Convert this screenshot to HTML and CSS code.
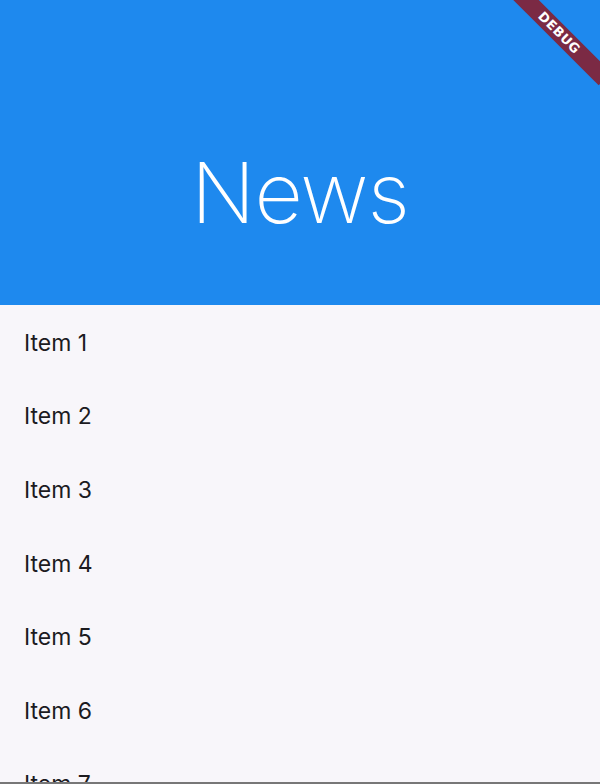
FILE: index.html
```html
<!DOCTYPE html>
<html>
<head>
<meta charset="utf-8">
<link rel="stylesheet" href="styles.css">
</head>
<body>
<div class="app">
  <header class="hero"><h1 class="title">News</h1></header>
  <ul class="list">
    <li class="item">Item 1</li>
    <li class="item">Item 2</li>
    <li class="item">Item 3</li>
    <li class="item">Item 4</li>
    <li class="item">Item 5</li>
    <li class="item">Item 6</li>
    <li class="item">Item 7</li>
    <li class="item">Item 8</li>
  </ul>
  <div class="bottom-line"></div>
  <div class="debug">DEBUG</div>
</div>
</body>
</html>
```
FILE: styles.css
```css
html, body { margin: 0; padding: 0; }
body { background: #f8f6fa; font-family: Inter, "Noto Sans", sans-serif; overflow: hidden; }
.app { position: relative; width: 600px; height: 784px; overflow: hidden; background: #f8f6fa; }
.hero { height: 305px; box-sizing: border-box; padding-top: 80px; background: #1e89ee; display: flex; align-items: center; justify-content: center; }
.title { margin: 0; font-weight: 200; font-size: 84px; color: #fff; letter-spacing: -1px; }
.list { list-style: none; margin: 0; padding: 1px 0 0; }
.item { height: 73.6px; display: flex; align-items: center; padding-left: 24px; font-size: 23px; color: #1c1b1f; }
.bottom-line { position: absolute; left: 0; right: 0; bottom: 0; height: 2px; background: #777; }
.debug { position: absolute; top: 24px; right: -24px; width: 130px; height: 18px; line-height: 18px; background: #7b2a44; color: #fff; font-family: "DejaVu Sans", sans-serif; font-weight: bold; font-size: 13px; text-align: center; transform: rotate(45deg); letter-spacing: 0.5px; }
```
